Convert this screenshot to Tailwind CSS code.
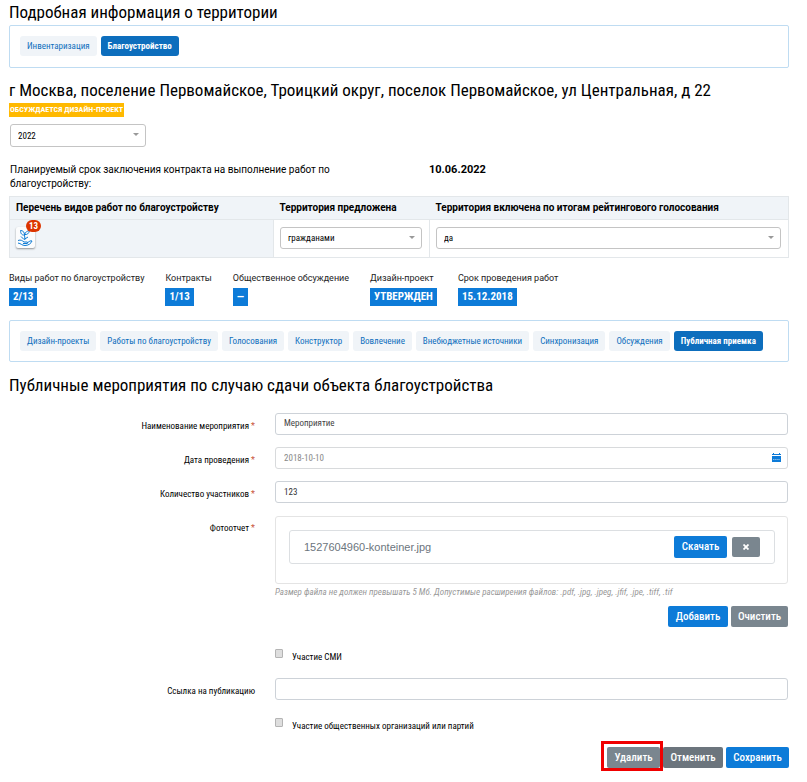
<!DOCTYPE html>
<html lang="ru">
<head>
<meta charset="utf-8">
<title>Подробная информация о территории</title>
<script src="https://cdn.jsdelivr.net/npm/@tailwindcss/browser@4"></script>
</head>
<body class="bg-white pl-[9px] pr-[18px] pb-3 font-['Roboto_Condensed','Liberation_Sans_Narrow',Roboto,sans-serif] text-[9px] leading-[14px] text-black">
<header>
  <h1 class="py-px text-[17px] leading-[23px]">Подробная информация о территории</h1>
  <nav aria-label="Разделы" class="flex gap-1 rounded-[2px] border border-[#bfdcf2] px-[10px] pt-[10px] pb-[11px]">
    <a href="#" class="rounded-[3px] bg-[#f0f4f8] px-[7px] leading-5 text-[#0d6ebd]">Инвентаризация</a>
    <a href="#" class="rounded-[3px] bg-[#0d6ebd] px-[7px] leading-5 font-bold text-white">Благоустройство</a>
  </nav>
</header>
<main>
  <h2 class="mt-[10px] mb-px text-[17px] leading-6">г Москва, поселение Первомайское, Троицкий округ, поселок Первомайское, ул Центральная, д 22</h2>
  <p class="w-fit bg-[#ffb900] px-px text-[8px] leading-[14px] font-bold text-white">ОБСУЖДАЕТСЯ ДИЗАЙН-ПРОЕКТ</p>
  <div class="relative mt-[7px] ml-px w-[136px]">
    <select aria-label="Год" class="block h-[23px] w-full appearance-none rounded-[3px] border border-[#c4c4c4] px-[7px]"><option>2022</option></select>
    <svg class="pointer-events-none absolute top-[9px] right-[7px] h-[3px] w-[6px]" viewBox="0 0 6 3"><path d="M0 0h6L3 3z" fill="#999"/></svg>
  </div>
  <dl class="mt-4 ml-px flex font-[Roboto] text-[10px] leading-[14px]">
    <dt class="w-[419px] pr-20">Планируемый срок заключения контракта на выполнение работ по благоустройству:</dt>
    <dd class="text-[11px] leading-[14px] font-bold">10.06.2022</dd>
  </dl>
  <table class="mt-[5px] w-full border-collapse border border-[#e3e7ea]">
    <thead class="bg-[#f0f4f8] text-left font-[Roboto] text-[10px]">
      <tr class="h-[23px]">
        <th class="w-[264px] px-[6px] font-bold">Перечень видов работ по благоустройству</th>
        <th class="w-[156px] px-[6px] font-bold">Территория предложена</th>
        <th class="px-[6px] font-bold">Территория включена по итогам рейтингового голосования</th>
      </tr>
    </thead>
    <tbody>
      <tr class="h-[38px] border-t border-[#e3e7ea]">
        <td class="border-r border-[#e3e7ea] bg-[#f0f4f8] px-[6px] pb-[2px]">
          <button type="button" aria-label="Озеленение" class="relative block h-[21px] w-[19px] rounded-[2px] bg-[#fbfcfd] shadow-[0_1px_2px_rgba(0,0,0,0.4)]">
            <svg class="h-[21px] w-[19px]" viewBox="0 0 19 21" fill="none" stroke="#0d7bd4" stroke-width="1"><path d="M9 12.500L8.500 8M8.500 8C6 8.500 4.500 6.500 4.500 3.500 7 3.500 8.500 5 8.500 8ZM8.500 7.500C9.500 5 11 4 13.500 3.500 13 6.500 11 8 8.500 7.500M5 9.500l3 3 4-2.500M2 13.500c3-1 4 0 6 1.500h3c1 0 1 1.500 0 1.500H7M2 16c3 .5 4 2.500 7 2.500 3.500 0 6-2 7-4.500-1-.8-3 .5-5 2"/></svg>
            <span class="absolute -top-[7px] left-[10px] h-3 w-[15px] rounded-full bg-[#dc3500] text-center leading-3 font-bold text-white">13</span>
          </button>
        </td>
        <td class="border-r border-[#e3e7ea] pr-[7px] pb-[2px] pl-[6px]">
          <div class="relative">
            <select aria-label="Территория предложена" class="block h-[22px] w-full appearance-none rounded-[3px] border border-[#c4c4c4] bg-white px-[7px]"><option>гражданами</option></select>
            <svg class="pointer-events-none absolute top-[9px] right-[7px] h-[3px] w-[6px]" viewBox="0 0 6 3"><path d="M0 0h6L3 3z" fill="#999"/></svg>
          </div>
        </td>
        <td class="pr-[7px] pb-[2px] pl-[6px]">
          <div class="relative">
            <select aria-label="Территория включена по итогам рейтингового голосования" class="block h-[22px] w-full appearance-none rounded-[3px] border border-[#c4c4c4] bg-white px-[7px]"><option>да</option></select>
            <svg class="pointer-events-none absolute top-[9px] right-[7px] h-[3px] w-[6px]" viewBox="0 0 6 3"><path d="M0 0h6L3 3z" fill="#999"/></svg>
          </div>
        </td>
      </tr>
    </tbody>
  </table>
  <dl class="mt-[13px] flex gap-[21px] whitespace-nowrap text-[#222]">
    <div><dt class="font-[Roboto]">Виды работ по благоустройству</dt><dd class="mt-[3px] w-fit bg-[#0d7bd8] px-1 text-[11px] leading-[18px] font-bold text-white">2/13</dd></div>
    <div><dt class="font-[Roboto]">Контракты</dt><dd class="mt-[3px] w-fit bg-[#0d7bd8] px-1 text-[11px] leading-[18px] font-bold text-white">1/13</dd></div>
    <div><dt class="font-[Roboto]">Общественное обсуждение</dt><dd class="mt-[3px] w-fit bg-[#0d7bd8] px-1 text-[11px] leading-[18px] font-bold text-white">—</dd></div>
    <div><dt class="font-[Roboto]">Дизайн-проект</dt><dd class="mt-[3px] w-fit bg-[#0d7bd8] px-1 text-[11px] leading-[18px] font-bold text-white">УТВЕРЖДЕН</dd></div>
    <div><dt class="font-[Roboto]">Срок проведения работ</dt><dd class="mt-[3px] w-fit bg-[#0d7bd8] px-1 text-[11px] leading-[18px] font-bold text-white">15.12.2018</dd></div>
  </dl>
  <nav aria-label="Благоустройство" class="mt-[14px] flex flex-wrap gap-1 rounded-[2px] border border-[#bfdcf2] p-[10px] whitespace-nowrap text-[#0d6ebd]">
    <a href="#" class="rounded-[3px] bg-[#f0f4f8] px-[7px] leading-5">Дизайн-проекты</a>
    <a href="#" class="rounded-[3px] bg-[#f0f4f8] px-[7px] leading-5">Работы по благоустройству</a>
    <a href="#" class="rounded-[3px] bg-[#f0f4f8] px-[7px] leading-5">Голосования</a>
    <a href="#" class="rounded-[3px] bg-[#f0f4f8] px-[7px] leading-5">Конструктор</a>
    <a href="#" class="rounded-[3px] bg-[#f0f4f8] px-[7px] leading-5">Вовлечение</a>
    <a href="#" class="rounded-[3px] bg-[#f0f4f8] px-[7px] leading-5">Внебюджетные источники</a>
    <a href="#" class="rounded-[3px] bg-[#f0f4f8] px-[7px] leading-5">Синхронизация</a>
    <a href="#" class="rounded-[3px] bg-[#f0f4f8] px-[7px] leading-5">Обсуждения</a>
    <a href="#" class="rounded-[3px] bg-[#0d6ebd] px-[7px] leading-5 font-bold text-white">Публичная приемка</a>
  </nav>
  <h2 class="mt-[11px] mb-px text-[17px] leading-6">Публичные мероприятия по случаю сдачи объекта благоустройства</h2>
  <form class="mt-4 pr-px">
    <div class="grid grid-cols-[246px_minmax(0,1fr)] gap-x-5 gap-y-3">
      <label for="name" class="pt-[6px] text-right">Наименование мероприятия <span class="text-[#c8563c]">*</span></label>
      <input id="name" value="Мероприятие" class="h-[22px] rounded-[3px] border border-[#cdd2d8] px-2 pb-[2px] text-[#444]">
      <label for="date" class="pt-[6px] text-right">Дата проведения <span class="text-[#c8563c]">*</span></label>
      <div class="relative">
        <input id="date" value="2018-10-10" class="block h-[22px] w-full rounded-[3px] border border-[#d8dadc] px-2 text-[#888]">
        <svg class="pointer-events-none absolute top-[6px] right-[7px] h-[9px] w-[9px]" viewBox="0 0 9 9"><path d="M1 0h1v1h5V0h1v1h1v1H0V1h1zM0 3h9v6H0z" fill="#0d7bd8"/><path d="M1 6.500h7" stroke="#fff" stroke-width=".5" stroke-dasharray="1.500 .6"/></svg>
      </div>
      <label for="count" class="pt-[6px] text-right">Количество участников <span class="text-[#c8563c]">*</span></label>
      <input id="count" value="123" class="h-[22px] rounded-[3px] border border-[#cdd2d8] px-2 text-[#333]">
      <div class="pt-[6px] text-right">Фотоотчет <span class="text-[#c8563c]">*</span></div>
      <div class="pt-px">
        <div class="rounded-[3px] border border-[#e4e4e4] pt-[13px] pr-3 pb-[19px] pl-[13px]">
          <div class="flex h-[34px] items-center rounded-[3px] border border-[#dcdfe2] px-[14px]">
            <span class="grow font-['Liberation_Sans',sans-serif] text-[11px] text-[#6c757d]">1527604960-konteiner.jpg</span>
            <button type="button" class="h-[22px] w-[53px] rounded-[2px] bg-[#0d7bd8] text-[11px] font-medium text-white">Скачать</button>
            <button type="button" aria-label="Удалить файл" class="ml-[5px] flex h-5 w-7 items-center justify-center rounded-[2px] bg-[#7a868f]"><svg class="h-[6px] w-[6px]" viewBox="0 0 6 6"><path d="M.5.500l5 5M5.500.5l-5 5" stroke="#fff" stroke-width="1.800"/></svg></button>
          </div>
        </div>
        <p class="mt-px text-[#999] italic">Размер файла не должен превышать 5 Мб. Допустимые расширения файлов: .pdf, .jpg, .jpeg, .jfif, .jpe, .tiff, .tif</p>
        <div class="mt-[7px] flex justify-end gap-[3px]">
          <button type="button" class="h-[21px] w-[60px] rounded-[2px] bg-[#0d7bd8] text-[11px] font-medium text-white">Добавить</button>
          <button type="button" class="h-[21px] w-[57px] rounded-[2px] bg-[#7a868f] text-[11px] font-medium text-white">Очистить</button>
        </div>
      </div>
      <label class="col-start-2 mt-[10px] mb-[2px] flex gap-[9px]"><input type="checkbox" class="h-[9px] w-2 appearance-none rounded-[1px] border border-[#b4b4b4] bg-[#dedede]"><span class="pt-px">Участие СМИ</span></label>
      <label for="link" class="pt-[6px] text-right">Ссылка на публикацию</label>
      <input id="link" class="h-[22px] rounded-[3px] border border-[#cdd2d8] px-2 text-[#444]">
      <label class="col-start-2 mt-[6px] flex gap-[9px]"><input type="checkbox" class="h-[9px] w-2 appearance-none rounded-[1px] border border-[#b4b4b4] bg-[#dedede]"><span class="pt-px">Участие общественных организаций или партий</span></label>
    </div>
    <div class="-mr-px mt-2 flex items-center justify-end">
      <div class="border-[3px] border-[#f00000] pt-[3px] pl-[3px]"><button type="button" class="block h-[21px] w-[53px] rounded-[2px] bg-[#7a868f] text-[11px] font-medium text-white">Удалить</button></div>
      <button type="button" class="mt-[3px] h-[21px] w-[60px] rounded-[2px] bg-[#6c757d] text-[11px] font-medium text-white">Отменить</button>
      <button type="submit" class="mt-[3px] ml-[3px] h-[21px] w-[63px] rounded-[2px] bg-[#0d7bd8] text-[11px] font-medium text-white">Сохранить</button>
    </div>
  </form>
</main>
</body>
</html>
